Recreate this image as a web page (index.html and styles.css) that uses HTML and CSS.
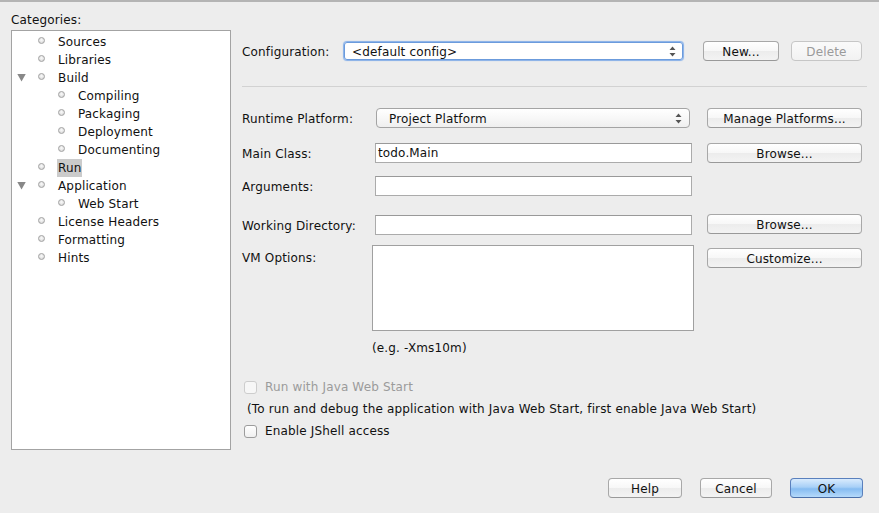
FILE: index.html
```html
<!DOCTYPE html>
<html>
<head>
<meta charset="utf-8">
<link rel="stylesheet" href="styles.css">
</head>
<body>
<div class="dialog">
  <div class="main">
    <div class="left">
      <div class="cat-label">Categories:</div>
      <div class="tree">
        <div class="node"><span class="tog"></span><span class="dot"></span><span class="txt">Sources</span></div>
        <div class="node"><span class="tog"></span><span class="dot"></span><span class="txt">Libraries</span></div>
        <div class="node"><span class="tog open"></span><span class="dot"></span><span class="txt">Build</span></div>
        <div class="node sub"><span class="tog"></span><span class="dot"></span><span class="txt">Compiling</span></div>
        <div class="node sub"><span class="tog"></span><span class="dot"></span><span class="txt">Packaging</span></div>
        <div class="node sub"><span class="tog"></span><span class="dot"></span><span class="txt">Deployment</span></div>
        <div class="node sub"><span class="tog"></span><span class="dot"></span><span class="txt">Documenting</span></div>
        <div class="node"><span class="tog"></span><span class="dot"></span><span class="txt sel">Run</span></div>
        <div class="node"><span class="tog open"></span><span class="dot"></span><span class="txt">Application</span></div>
        <div class="node sub"><span class="tog"></span><span class="dot"></span><span class="txt">Web Start</span></div>
        <div class="node"><span class="tog"></span><span class="dot"></span><span class="txt">License Headers</span></div>
        <div class="node"><span class="tog"></span><span class="dot"></span><span class="txt">Formatting</span></div>
        <div class="node"><span class="tog"></span><span class="dot"></span><span class="txt">Hints</span></div>
      </div>
    </div>
    <div class="right">
      <div class="config-row">
        <span class="config-label">Configuration:</span>
        <div class="combo focus config-combo"><span class="combo-text">&lt;default config&gt;</span><svg class="arrows" width="7" height="11" viewBox="0 0 7 11"><path d="M3.5 0.5 L6.5 4 L0.5 4 Z M3.5 10.5 L6.5 7 L0.5 7 Z" fill="#555"/></svg></div>
        <button class="btn new-btn">New...</button>
        <button class="btn del-btn" disabled>Delete</button>
      </div>
      <div class="divider"></div>
      <div class="row r-runtime">
        <span class="lbl">Runtime Platform:</span>
        <div class="combo runtime-combo"><span class="combo-text">Project Platform</span><svg class="arrows" width="7" height="11" viewBox="0 0 7 11"><path d="M3.5 0.5 L6.5 4 L0.5 4 Z M3.5 10.5 L6.5 7 L0.5 7 Z" fill="#555"/></svg></div>
        <button class="btn side-btn">Manage Platforms...</button>
      </div>
      <div class="row r-main">
        <span class="lbl">Main Class:</span>
        <div class="field">todo.Main</div>
        <button class="btn side-btn">Browse...</button>
      </div>
      <div class="row r-args">
        <span class="lbl">Arguments:</span>
        <div class="field"></div>
      </div>
      <div class="row r-wd">
        <span class="lbl">Working Directory:</span>
        <div class="field"></div>
        <button class="btn side-btn wd-btn">Browse...</button>
      </div>
      <div class="row r-vm">
        <span class="lbl vm-lbl">VM Options:</span>
        <div class="textarea"></div>
        <button class="btn side-btn vm-btn">Customize...</button>
      </div>
      <div class="hint">(e.g. -Xms10m)</div>
      <div class="check disabled r-cb1"><span class="box"></span><span>Run with Java Web Start</span></div>
      <div class="note">(To run and debug the application with Java Web Start, first enable Java Web Start)</div>
      <div class="check r-cb2"><span class="box"></span><span>Enable JShell access</span></div>
    </div>
  </div>
  <div class="footer">
    <button class="btn help-btn">Help</button>
    <button class="btn cancel-btn">Cancel</button>
    <button class="btn ok-btn">OK</button>
  </div>
</div>
</body>
</html>
```

FILE: styles.css
```css
html, body {
  margin: 0;
  padding: 0;
}
body {
  width: 879px;
  height: 513px;
  overflow: hidden;
  background: #ededed;
  font-family: "DejaVu Sans", "Lucida Grande", sans-serif;
  font-size: 12px;
  letter-spacing: 0.15px;
  color: #111;
}
.dialog {
  border-top: 2px solid #b4b4b4;
  height: 511px;
  display: flex;
  flex-direction: column;
}
.main {
  display: flex;
}
.left {
  margin-left: 11px;
  width: 220px;
}
.cat-label {
  margin-top: 10px;
  line-height: 16px;
  height: 16px;
}
.tree {
  margin-top: 2px;
  box-sizing: border-box;
  height: 420px;
  background: #fff;
  border: 1px solid #a3a3a3;
  padding-top: 1px;
}
.node {
  box-sizing: border-box;
  height: 18px;
  display: flex;
  align-items: center;
  padding-left: 5px;
  padding-top: 2px;
}
.tog {
  width: 9px;
  height: 8px;
  flex: none;
}
.tog.open {
  background: #888;
  clip-path: polygon(0 0, 100% 0, 50% 100%);
  margin-top: -1px;
}
.dot {
  flex: none;
  width: 5px;
  height: 5px;
  border-radius: 50%;
  border: 1px solid #a2a2a2;
  background: radial-gradient(circle at 50% 40%, #fbfbfb 0, #e2e2e2 60%, #c4c4c4 100%);
  margin-left: 12px;
  margin-top: -3px;
}
.node.sub .dot {
  margin-left: 32px;
}
.txt {
  margin-left: 12px;
  line-height: 17px;
  padding: 0 1px;
}
.txt.sel {
  background: #cbcbcb;
  margin-top: -1px;
  padding-top: 1px;
}
.right {
  margin-left: 11px;
  padding-top: 39px;
  width: 625px;
}
.config-row {
  display: flex;
  align-items: center;
  height: 20px;
}
.config-label {
  width: 101px;
  flex: none;
  padding-top: 1px;
}
.combo {
  box-sizing: border-box;
  height: 20px;
  border: 1px solid #a4a4a4;
  border-radius: 4px;
  background: linear-gradient(#ffffff, #f6f6f6 60%, #efefef);
  display: flex;
  align-items: center;
  position: relative;
  flex: none;
}
.combo.focus {
  border: 1px solid #8fb4e8;
  box-shadow: inset 0 0 0 1px #6b9bdc, 0 0 1px 0 #9cc0ee;
  background: #fff;
}
.config-combo {
  width: 341px;
}
.combo-text {
  padding-left: 12px;
  padding-top: 1px;
}
.config-combo .combo-text {
  padding-left: 8px;
}
.arrows {
  position: absolute;
  right: 7px;
  top: 4px;
}
.btn {
  box-sizing: border-box;
  height: 20px;
  font-family: inherit;
  font-size: 12px;
  letter-spacing: 0.15px;
  color: #111;
  border: 1px solid #a8a8a8;
  border-bottom-color: #999;
  border-radius: 4px;
  background: linear-gradient(#ffffff, #f7f7f7 50%, #ececec 51%, #f3f3f3);
  padding: 1px 0 0;
  flex: none;
  line-height: 16px;
}
.btn:disabled {
  color: #9a9a9a;
  border-color: #c6c6c6;
  background: linear-gradient(#fafafa, #f2f2f2);
}
.new-btn {
  margin-left: 19px;
  width: 76px;
}
.del-btn {
  margin-left: 12px;
  width: 71px;
}
.divider {
  margin-top: 25px;
  height: 1px;
  background: #d2d2d2;
  width: 625px;
}
.row {
  display: flex;
  align-items: center;
  height: 20px;
}
.lbl {
  width: 133px;
  flex: none;
  padding-top: 1px;
}
.field {
  box-sizing: border-box;
  width: 317px;
  height: 20px;
  background: #fff;
  border: 1px solid #ababab;
  border-top-color: #999;
  padding-left: 2px;
  padding-top: 1px;
  line-height: 17px;
  flex: none;
}
.side-btn {
  margin-left: 15px;
  width: 155px;
}
.r-runtime {
  margin-top: 21px;
}
.runtime-combo {
  margin-left: 1px;
  width: 314px;
}
.runtime-combo + .side-btn {
  margin-left: 17px;
}
.r-main {
  margin-top: 15px;
}
.r-args {
  margin-top: 13px;
}
.r-wd {
  margin-top: 19px;
}
.wd-btn {
  position: relative;
  top: -1px;
}
.r-vm {
  margin-top: 10px;
  height: auto;
  align-items: flex-start;
}
.vm-lbl {
  width: 130px;
  line-height: 16px;
  margin-top: 4px;
}
.textarea {
  box-sizing: border-box;
  width: 322px;
  height: 86px;
  background: #fff;
  border: 1px solid #a0a0a0;
  flex: none;
}
.vm-btn {
  margin-left: 13px;
  margin-top: 3px;
}
.hint {
  margin-top: 9px;
  padding-left: 130px;
  line-height: 16px;
}
.check {
  display: flex;
  align-items: center;
  height: 16px;
  padding-left: 2px;
}
.check .box {
  box-sizing: border-box;
  width: 13px;
  height: 13px;
  border: 1px solid #9c9c9c;
  border-radius: 3px;
  background: linear-gradient(#ffffff, #f0f0f0);
  margin-right: 8px;
  flex: none;
}
.check.disabled {
  color: #9b9b9b;
}
.check.disabled .box {
  border-color: #cdcdcd;
  background: #f7f7f7;
}
.r-cb1 {
  margin-top: 23px;
}
.note {
  margin-top: 6px;
  padding-left: 5px;
  line-height: 16px;
}
.r-cb2 {
  margin-top: 6px;
}
.footer {
  margin-top: 28px;
  display: flex;
  justify-content: flex-end;
  padding-right: 16px;
}
.help-btn {
  width: 74px;
}
.cancel-btn {
  margin-left: 18px;
  width: 72px;
}
.ok-btn {
  margin-left: 18px;
  width: 73px;
  border-color: #5a80bd;
  border-bottom-color: #4a6fa8;
  background: linear-gradient(#d9ebfd, #a8d0f7 45%, #86bcf1 55%, #b5dafb);
}
```
